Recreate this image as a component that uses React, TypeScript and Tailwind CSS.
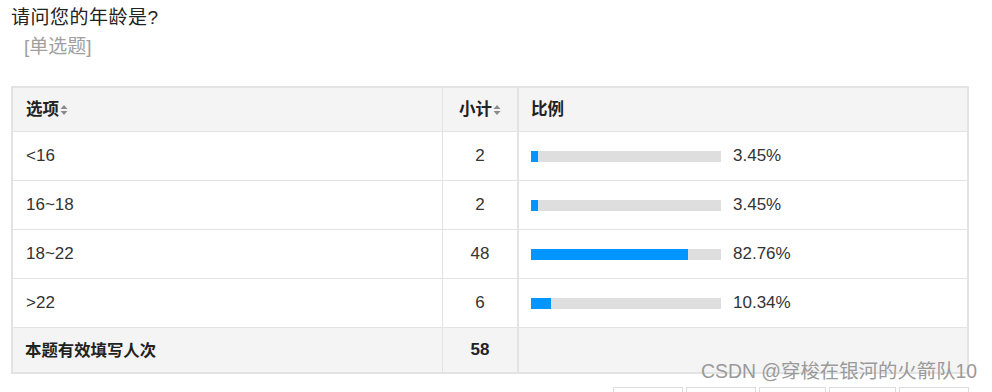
import React from "react";

const font = "'Liberation Sans', Arial, 'Noto Sans CJK SC', sans-serif";

const rows = [
  { label: "<16", count: 2, pct: 3.45 },
  { label: "16~18", count: 2, pct: 3.45 },
  { label: "18~22", count: 48, pct: 82.76 },
  { label: ">22", count: 6, pct: 10.34 },
];

function SortIcon() {
  return (
    <svg width="8" height="12" viewBox="0 0 8 12" className="ml-[1px] mt-[1px]">
      <path d="M4 1 L7.5 5 L0.5 5 Z" fill="#8a8a8a" />
      <path d="M4 11 L7.5 7 L0.5 7 Z" fill="#8a8a8a" />
    </svg>
  );
}

export default function App() {
  return (
    <div
      className="relative w-[992px] h-[392px] overflow-hidden bg-white text-[#333]"
      style={{ fontFamily: font }}
    >
      <div className="pl-[11px] pt-[6px]">
        <div className="text-[19px] leading-[24px] tracking-[0.5px] text-[#222]">请问您的年龄是?</div>
        <div className="mt-[5px] pl-[13px] text-[19px] leading-[24px] text-[#a0a0a0]">[单选题]</div>
      </div>

      <div className="ml-[11px] mt-[27px] w-[958px] border-2 border-[#e3e3e3] text-[17px]">
        {/* header */}
        <div className="grid grid-cols-[430px_76px_1fr] h-[44px] bg-[#f4f4f4] border-b border-[#e3e3e3] font-bold text-[#222] text-[16.5px]">
          <div className="flex items-center pl-[13px] border-r border-[#e3e3e3]">
            选项
            <SortIcon />
          </div>
          <div className="flex items-center justify-center border-r-2 border-[#e3e3e3]">
            小计
            <SortIcon />
          </div>
          <div className="flex items-center pl-[12px]">比例</div>
        </div>
        {rows.map((r, i) => (
          <div
            key={i}
            className="grid grid-cols-[430px_76px_1fr] h-[49px] border-b border-[#e3e3e3]"
          >
            <div className="flex items-center pl-[13px] border-r border-[#e3e3e3]">{r.label}</div>
            <div className="flex items-center justify-center border-r-2 border-[#e3e3e3]">{r.count}</div>
            <div className="flex items-center pl-[12px]">
              <div className="w-[190px] h-[11px] bg-[#dedede]">
                <div className="h-full bg-[#0095ff]" style={{ width: `${r.pct}%` }} />
              </div>
              <span className="ml-[12px]">{r.pct.toFixed(2)}%</span>
            </div>
          </div>
        ))}
        <div className="grid grid-cols-[430px_76px_1fr] h-[44px] bg-[#f4f4f4] font-bold text-[#222]">
          <div className="flex items-center pl-[12px] border-r border-[#e3e3e3] text-[16.4px]">本题有效填写人次</div>
          <div className="flex items-center justify-center border-r-2 border-[#e3e3e3]">58</div>
          <div />
        </div>
      </div>

      <div className="mt-[13px] w-[969px] flex justify-end gap-[3px]">
        {[70, 70, 67, 67, 70].map((w, i) => (
          <div key={i} className="h-[30px] border border-[#dcdcdc] bg-white" style={{ width: w }} />
        ))}
      </div>

      <div className="absolute left-[701px] top-[359px] text-[19.4px] leading-[24px] text-[#9a9a9a] whitespace-nowrap">
        CSDN @穿梭在银河的火箭队10
      </div>
    </div>
  );
}
